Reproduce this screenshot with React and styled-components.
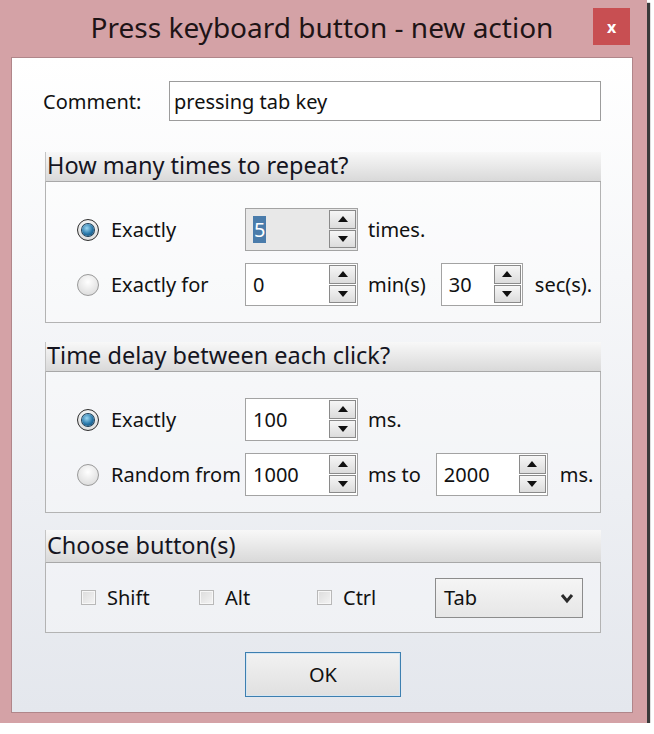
import React from "react";
import styled, { createGlobalStyle } from "styled-components";

const GlobalStyle = createGlobalStyle`
	html, body {
		margin: 0;
		padding: 0;
		background: #ffffff;
	}
	body {
		font-family: "Noto Sans", "Open Sans", sans-serif;
		color: #111;
	}
`;

const Window = styled.div`
	width: 647px;
	height: 723px;
	box-sizing: border-box;
	background: #d4a2a6;
	box-shadow: 3px 3px 1px #3a3a3a;
	display: flex;
	flex-direction: column;
	padding: 0 14px 10px 11px;
`;

const TitleBar = styled.div`
	height: 57px;
	flex-shrink: 0;
	display: grid;
	grid-template-columns: 1fr auto 1fr;
	align-items: start;
`;

const Title = styled.div`
	grid-column: 2;
	font-size: 28px;
	line-height: 54px;
	color: #1e1416;
	white-space: nowrap;
`;

const CloseButton = styled.div`
	grid-column: 3;
	justify-self: end;
	margin: 8px 3px 0 0;
	width: 37px;
	height: 37px;
	background: #c84f52;
	color: #fff;
	font-size: 16px;
	font-weight: bold;
	display: flex;
	align-items: center;
	justify-content: center;
`;

const Client = styled.div`
	flex: 1;
	border: 1px solid #b0868a;
	background: linear-gradient(#ffffff, #e4e7ed);
	padding: 0 31px 0 33px;
	display: flex;
	flex-direction: column;
`;

const CommentRow = styled.div`
	margin-top: 23px;
	display: flex;
	align-items: center;
	height: 40px;
`;

const CommentLabel = styled.div`
	width: 126px;
	margin-left: -2px;
	font-size: 20px;
`;

const TextInput = styled.div`
	flex: 1;
	height: 100%;
	box-sizing: border-box;
	border: 1px solid #9c9c9c;
	background: #fff;
	font-size: 20px;
	display: flex;
	align-items: center;
	padding-left: 4px;
`;

const Section = styled.div`
	margin-top: ${(p) => p.$top}px;
	display: flex;
	flex-direction: column;
`;

const SectionHeader = styled.div`
	height: ${(p) => p.$height || 30}px;
	box-sizing: border-box;
	background: linear-gradient(#f8f8f8, #d9d9d9);
	border-left: 1px solid #c4c4c4;
	border-bottom: 1px solid #a8a8a8;
	font-size: 23.5px;
	line-height: ${(p) => (p.$height || 30) - 3}px;
	padding-left: 1px;
	color: #15151f;
	white-space: nowrap;
`;

const SectionBox = styled.div`
	height: ${(p) => p.$height}px;
	box-sizing: border-box;
	border: 1px solid #b3b3b3;
	border-top: none;
	background: rgba(255, 255, 255, 0.35);
	display: flex;
	flex-direction: column;
	justify-content: ${(p) => (p.$center ? "center" : "flex-start")};
	padding: ${(p) => (p.$center ? "0 0 0 35px" : "26px 0 0 31px")};
	gap: 12px;
`;

const Row = styled.div`
	height: 43px;
	display: flex;
	align-items: center;
`;

const RadioOption = styled.div`
	width: 168px;
	display: flex;
	align-items: center;
	gap: 12px;
	font-size: 20px;
	white-space: nowrap;
`;

const Radio = styled.div`
	width: 22px;
	height: 22px;
	flex-shrink: 0;
	box-sizing: border-box;
	border-radius: 50%;
	border: 1px solid ${(p) => (p.$checked ? "#2e2e2e" : "#9a9a9a")};
	background: radial-gradient(circle at 50% 35%, #ffffff, #d5d5d5);
	display: flex;
	align-items: center;
	justify-content: center;
`;

const RadioDot = styled.div`
	width: 12px;
	height: 12px;
	border-radius: 50%;
	background: radial-gradient(circle at 40% 35%, #9ad6f2, #2776a8 55%, #0d3b5e);
	box-shadow: 0 0 0 1px #1d3f58;
`;

const Spin = styled.div`
	width: ${(p) => p.$width}px;
	height: 100%;
	flex-shrink: 0;
	box-sizing: border-box;
	border: 1px solid #a3a3a3;
	background: ${(p) => (p.$focused ? "#e8e8e8" : "#ffffff")};
	display: flex;
`;

const SpinValue = styled.div`
	flex: 1;
	display: flex;
	align-items: center;
	padding-left: 7px;
	font-size: 20px;
`;

const Selected = styled.span`
	background: #4a7cab;
	color: #fff;
	padding: 0 1px;
`;

const SpinButtons = styled.div`
	width: 27px;
	display: flex;
	flex-direction: column;
	padding: 1px 1px 2px 0;
	gap: 1px;
`;

const SpinButton = styled.div`
	flex: 1;
	box-sizing: border-box;
	border: 1px solid #8a8a8a;
	background: linear-gradient(#f6f6f6, #dcdcdc);
	display: flex;
	align-items: center;
	justify-content: center;
	&::after {
		content: "";
		border-left: 5px solid transparent;
		border-right: 5px solid transparent;
		${(p) => (p.$down ? "border-top" : "border-bottom")}: 6px solid #111;
	}
`;

const Unit = styled.div`
	font-size: 20px;
	margin-left: ${(p) => p.$left}px;
	margin-right: ${(p) => p.$right || 0}px;
	white-space: nowrap;
`;

const CheckItem = styled.div`
	width: 118px;
	display: flex;
	align-items: center;
	gap: 11px;
	font-size: 20px;
`;

const CheckBox = styled.div`
	width: 15px;
	height: 15px;
	box-sizing: border-box;
	border: 1px solid #b8b8b8;
	background: linear-gradient(135deg, #dcdcdc, #f4f4f4);
	box-shadow: inset 0 0 0 1px #f7f7f7;
`;

const Select = styled.div`
	width: 148px;
	height: 40px;
	box-sizing: border-box;
	border: 1px solid #8c8c8c;
	background: linear-gradient(#f5f5f5, #e6e6e6);
	display: flex;
	align-items: center;
	justify-content: space-between;
	padding: 0 8px 0 8px;
	font-size: 20px;
`;

const OkButton = styled.div`
	margin: 19px auto 0;
	width: 156px;
	height: 45px;
	box-sizing: border-box;
	border: 1px solid #3d7fb0;
	background: linear-gradient(#f2f2f2, #e0e0e0);
	box-shadow: inset 0 0 0 1px #d6e6f2;
	display: flex;
	align-items: center;
	justify-content: center;
	font-size: 20px;
`;

const SpinBox = ({ width, focused, children }) => (
	<Spin $width={width} $focused={focused}>
		<SpinValue>{children}</SpinValue>
		<SpinButtons>
			<SpinButton />
			<SpinButton $down />
		</SpinButtons>
	</Spin>
);

const Option = ({ checked, label }) => (
	<RadioOption>
		<Radio $checked={checked}>{checked && <RadioDot />}</Radio>
		{label}
	</RadioOption>
);

const Chevron = () => (
	<svg width="14" height="12" viewBox="0 0 14 12">
		<polyline
			points="2,3 7,9 12,3"
			fill="none"
			stroke="#2a2a2a"
			strokeWidth="3"
		/>
	</svg>
);

export default function App() {
	return (
		<>
			<GlobalStyle />
			<Window>
				<TitleBar>
					<Title>Press keyboard button - new action</Title>
					<CloseButton>x</CloseButton>
				</TitleBar>
				<Client>
					<CommentRow>
						<CommentLabel>Comment:</CommentLabel>
						<TextInput>pressing tab key</TextInput>
					</CommentRow>

					<Section $top={31}>
						<SectionHeader>How many times to repeat?</SectionHeader>
						<SectionBox $height={141}>
							<Row>
								<Option checked label="Exactly" />
								<SpinBox width={113} focused>
									<Selected>5</Selected>
								</SpinBox>
								<Unit $left={10}>times.</Unit>
							</Row>
							<Row>
								<Option label="Exactly for" />
								<SpinBox width={113}>0</SpinBox>
								<Unit $left={10} $right={15}>
									min(s)
								</Unit>
								<SpinBox width={82}>30</SpinBox>
								<Unit $left={12}>sec(s).</Unit>
							</Row>
						</SectionBox>
					</Section>

					<Section $top={19}>
						<SectionHeader>Time delay between each click?</SectionHeader>
						<SectionBox $height={141}>
							<Row>
								<Option checked label="Exactly" />
								<SpinBox width={113}>100</SpinBox>
								<Unit $left={10}>ms.</Unit>
							</Row>
							<Row>
								<Option label="Random from" />
								<SpinBox width={113}>1000</SpinBox>
								<Unit $left={10} $right={15}>
									ms to
								</Unit>
								<SpinBox width={112}>2000</SpinBox>
								<Unit $left={12}>ms.</Unit>
							</Row>
						</SectionBox>
					</Section>

					<Section $top={17}>
						<SectionHeader $height={33}>Choose button(s)</SectionHeader>
						<SectionBox $height={70} $center>
							<Row>
								<CheckItem>
									<CheckBox />
									Shift
								</CheckItem>
								<CheckItem>
									<CheckBox />
									Alt
								</CheckItem>
								<CheckItem>
									<CheckBox />
									Ctrl
								</CheckItem>
								<Select>
									Tab
									<Chevron />
								</Select>
							</Row>
						</SectionBox>
					</Section>

					<OkButton>OK</OkButton>
				</Client>
			</Window>
		</>
	);
}
